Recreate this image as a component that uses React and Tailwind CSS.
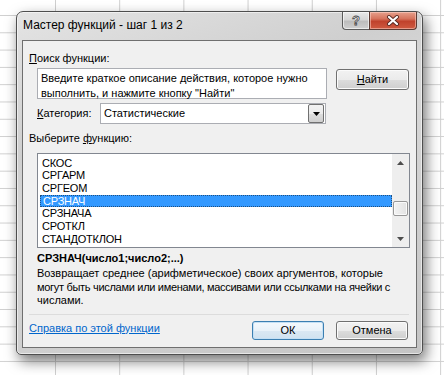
import React from 'react';

const FONT = { fontFamily: '"Liberation Sans", Arial, sans-serif' };

const functions = ['СКОС', 'СРГАРМ', 'СРГЕОМ', 'СРЗНАЧ', 'СРЗНАЧА', 'СРОТКЛ', 'СТАНДОТКЛОН'];

function Button({ children, primary, className = '' }) {
  return (
    <div
      className={`flex items-center justify-center rounded-[3px] border text-[11px] text-black ${
        primary
          ? 'border-[#3c7fb1] bg-[linear-gradient(to_bottom,#f4f9fd_0%,#e9f2f9_50%,#dae8f3_51%,#d0e2f0_100%)] shadow-[inset_0_0_0_1px_#c4e0f5]'
          : 'border-[#707070] bg-[linear-gradient(to_bottom,#f2f2f2_0%,#ebebeb_50%,#dddddd_51%,#cfcfcf_100%)] shadow-[inset_0_0_0_1px_#fbfbfb]'
      } ${className}`}
    >
      {children}
    </div>
  );
}

function TitleButtons() {
  return (
    <div className="flex h-[18px] self-start">
      <div className="flex w-[27px] items-center justify-center rounded-bl-[4px] border border-t-0 border-r-0 border-[#5b5b5b] bg-[linear-gradient(to_bottom,#e9e9e9_0%,#d6d6d6_45%,#bdbdbd_55%,#cfcfcf_100%)] shadow-[inset_0_0_0_1px_rgba(255,255,255,0.6)]">
        <span className="text-[13px] font-bold leading-none text-[#f7f7f7] [-webkit-text-stroke:0.8px_#4a4a4a]">?</span>
      </div>
      <div className="flex w-[48px] items-center justify-center rounded-br-[4px] border border-t-0 border-[#5b3a33] bg-[linear-gradient(to_bottom,#e6a08c_0%,#d6735c_40%,#c0422c_55%,#cf5a40_100%)] shadow-[inset_0_0_0_1px_rgba(255,220,210,0.5)]">
        <svg width="14" height="11" viewBox="0 0 14 11">
          <path d="M3 2 L11 9 M11 2 L3 9" stroke="#5a2a22" strokeWidth="4" strokeLinecap="round" />
          <path d="M3 2 L11 9 M11 2 L3 9" stroke="#ffffff" strokeWidth="2.2" strokeLinecap="round" />
        </svg>
      </div>
    </div>
  );
}

function ListBox() {
  return (
    <div className="ml-[14px] mt-[7px] flex h-[95px] w-[373px] border border-[#828790] bg-white">
      <div className="flex-1 pl-[2px] pt-[2.7px]">
        {functions.map((f) => (
          <div
            key={f}
            className={`flex h-[12.7px] items-center pl-[2px] text-[11px] leading-none tracking-[-0.2px] ${
              f === 'СРЗНАЧ'
                ? 'border border-dotted border-[#1f4f80] bg-[#3399ff] pl-[1px] text-white'
                : 'text-black'
            }`}
          >
            {f}
          </div>
        ))}
      </div>
      <div className="flex w-[17px] flex-col items-center bg-[#eeeeee]">
        <div className="flex h-[17px] w-full items-center justify-center">
          <svg width="7" height="4" viewBox="0 0 7 4">
            <path d="M0 4 L3.5 0 L7 4 Z" fill="#4d4d4d" />
          </svg>
        </div>
        <div className="mt-[30px] h-[15px] w-[15px] rounded-[2px] border border-[#979797] bg-[linear-gradient(to_right,#f3f3f3,#e2e2e2)] shadow-[inset_0_0_0_1px_#fafafa]" />
        <div className="mt-auto flex h-[17px] w-full items-center justify-center">
          <svg width="7" height="4" viewBox="0 0 7 4">
            <path d="M0 0 L7 0 L3.5 4 Z" fill="#4d4d4d" />
          </svg>
        </div>
      </div>
    </div>
  );
}

export default function App() {
  return (
    <div
      style={FONT}
      className="h-[375px] w-[444px] overflow-hidden bg-white bg-[linear-gradient(to_right,#cfcfcf_1px,transparent_1px),linear-gradient(to_bottom,#cfcfcf_1px,transparent_1px)] bg-[size:64.2px_17.3px] bg-[position:55px_15px] pl-[16px] pt-[11px]"
    >
      {/* dialog window */}
      <div className="flex h-[344px] w-[407px] flex-col rounded-t-[7px] rounded-b-[5px] border border-[#4e4e4e] bg-[linear-gradient(160deg,#e4e4e4_0%,#cfcfcf_30%,#d8d8d8_45%,#c4c4c4_100%)] px-[5px] pb-[6px] shadow-[3px_6px_14px_rgba(0,0,0,0.55),inset_0_0_0_1px_rgba(255,255,255,0.55)]">
        <div className="flex h-[28px] shrink-0 justify-between">
          <div className="mt-[5px] pl-[1px] text-[12px] leading-[16px] text-black">Мастер функций - шаг 1 из 2</div>
          <TitleButtons />
        </div>

        {/* client area */}
        <div className="flex h-[308px] w-[395px] flex-col border border-[#6f6f6f] bg-[#f0f0f0] text-[11px] text-black">
          <div className="ml-[6px] mt-[10px] h-[15px] leading-[15px]">
            <span className="underline">П</span>оиск функции:
          </div>

          <div className="ml-[14px] mt-[2px] flex">
            <div className="h-[31px] w-[290px] border border-[#abadb3] bg-white pl-[3px] pt-[2px] leading-[15px]">
              Введите краткое описание действия, которое нужно
              <br />
              выполнить, и нажмите кнопку "Найти"
            </div>
            <Button className="ml-[9px] mt-[1px] h-[21px] w-[73px]">
              <span className="underline">Н</span>айти
            </Button>
          </div>

          <div className="ml-[14px] mt-[4px] flex items-center">
            <div className="w-[63px]">
              <span className="underline">К</span>атегория:
            </div>
            <div className="flex h-[21px] w-[226px] items-center border border-[#abadb3] bg-white p-px">
              <div className="flex-1 pl-[2px]">Статистические</div>
              <div className="flex h-[19px] w-[16px] items-center justify-center rounded-[2px] border border-[#707070] bg-[linear-gradient(to_bottom,#f2f2f2_0%,#ebebeb_50%,#dddddd_51%,#cfcfcf_100%)]">
                <svg width="7" height="4" viewBox="0 0 7 4">
                  <path d="M0 0 L7 0 L3.5 4 Z" fill="#000" />
                </svg>
              </div>
            </div>
          </div>

          <div className="ml-[6px] mt-[7px] h-[15px] leading-[15px]">
            Выберите <span className="underline">ф</span>ункцию:
          </div>

          <ListBox />

          <div className="ml-[14px] mt-[3px] h-[15px] font-bold leading-[15px]">СРЗНАЧ(число1;число2;...)</div>
          <div className="ml-[14px] mt-[1px] leading-[13.5px]">
            Возвращает среднее (арифметическое) своих аргументов, которые
            <br />
            <span className="tracking-[-0.3px]">могут быть числами или именами, массивами или ссылками на ячейки с</span>
            <br />
            числами.
          </div>

          <div className="ml-[6px] mt-[6px] w-[380px] border-t border-[#dcdcdc]" />

          <div className="mr-[8px] mt-[6px] flex">
            <a className="ml-[6px] h-[15px] leading-[15px] text-[#0066cc] underline">Справка по этой функции</a>
            <Button primary className="ml-auto h-[19px] w-[72px]">
              ОК
            </Button>
            <Button className="ml-[12px] h-[19px] w-[72px]">Отмена</Button>
          </div>
        </div>
      </div>
    </div>
  );
}
